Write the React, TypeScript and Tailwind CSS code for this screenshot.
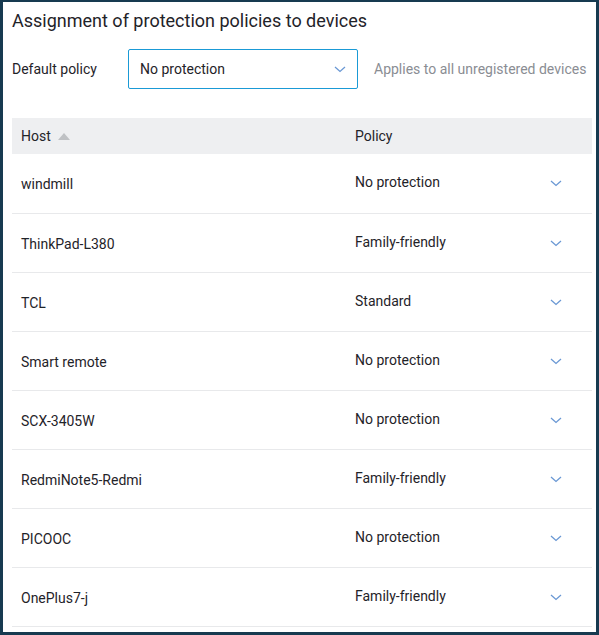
const rows: [string, string][] = [
  ['windmill', 'No protection'],
  ['ThinkPad-L380', 'Family-friendly'],
  ['TCL', 'Standard'],
  ['Smart remote', 'No protection'],
  ['SCX-3405W', 'No protection'],
  ['RedmiNote5-Redmi', 'Family-friendly'],
  ['PICOOC', 'No protection'],
  ['OnePlus7-j', 'Family-friendly'],
];

function Chevron({ className = '' }: { className?: string }) {
  return (
    <svg width="12" height="7" viewBox="0 0 12 7" fill="none" className={className}>
      <path d="M1 1l5 4.5L11 1" stroke="currentColor" strokeWidth="1.3" />
    </svg>
  );
}

export default function App() {
  return (
    <div
      className="h-[635px] w-[599px] overflow-hidden border-[#173a50] border-t-2 border-l-[3px] border-r-[3px] border-b-[3px] bg-white text-[#1f2329]"
      style={{ fontFamily: 'Roboto, "Noto Sans", sans-serif' }}
    >
      <div className="pl-[9px] pr-[1px]">
        {/* Title */}
        <h1 className="pt-[6px] text-[18px] leading-[26px]">Assignment of protection policies to devices</h1>

        {/* Default policy */}
        <div className="mt-[15px] flex items-center text-[14px]">
          <span className="w-[116px]">Default policy</span>
          <div className="flex h-[40px] w-[230px] items-center justify-between rounded-[2px] border border-[#1a9ad6] pl-[11px] pr-[11px]">
            <span>No protection</span>
            <Chevron className="text-[#6a98d4]" />
          </div>
          <span className="ml-[16px] text-[#8a8d93]">Applies to all unregistered devices</span>
        </div>

        {/* Table */}
        <div className="mt-[29px] w-[580px]">
          <div className="flex h-[36px] items-center bg-[#eeeff1] text-[14px]">
            <div className="flex w-[343px] items-center pl-[9px]">
              <span>Host</span>
              <svg width="12" height="7" viewBox="0 0 12 7" className="ml-[7px]">
                <path d="M0 7L6 0l6 7z" fill="#bfc1c4" />
              </svg>
            </div>
            <div>Policy</div>
          </div>
          {rows.map(([host, policy], i) => (
            <div
              key={host}
              className={`flex items-center border-b border-[#e8e9eb] text-[14px] ${i === 0 ? 'h-[60px]' : 'h-[59px]'}`}
            >
              <div className="w-[343px] pl-[9px] pt-[2px]">{host}</div>
              <div className="flex flex-1 items-center justify-between pr-[30px] pb-[2px]">
                <span>{policy}</span>
                <Chevron className="mt-[2px] text-[#6a98d4]" />
              </div>
            </div>
          ))}
        </div>
      </div>
    </div>
  );
}
